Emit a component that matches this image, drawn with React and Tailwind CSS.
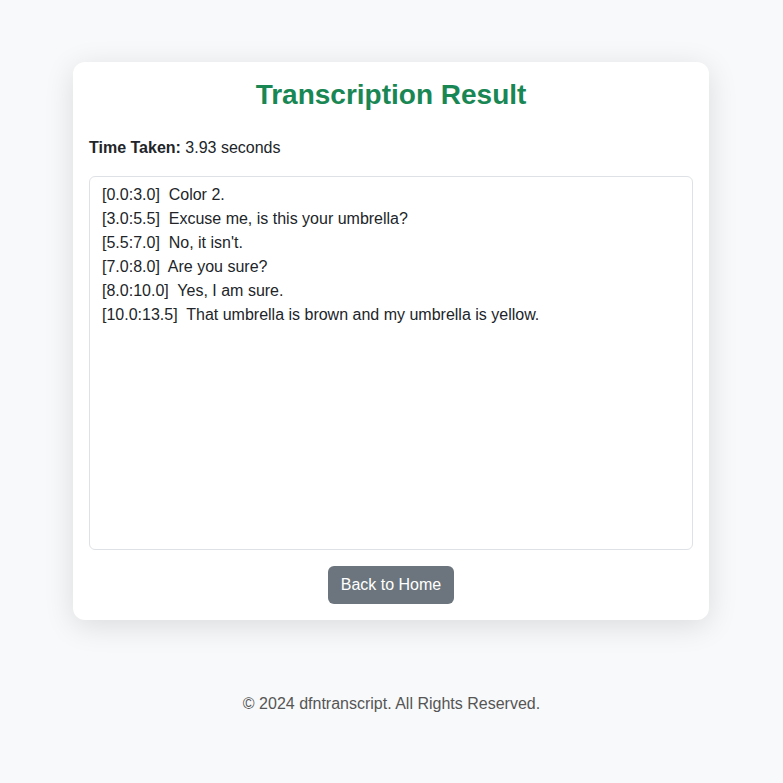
export default function App() {
  const lines = [
    "[0.0:3.0]  Color 2.",
    "[3.0:5.5]  Excuse me, is this your umbrella?",
    "[5.5:7.0]  No, it isn't.",
    "[7.0:8.0]  Are you sure?",
    "[8.0:10.0]  Yes, I am sure.",
    "[10.0:13.5]  That umbrella is brown and my umbrella is yellow.",
  ];
  return (
    <div className="min-h-[783px] bg-[#f8f9fa] text-[#212529] font-['Liberation_Sans',Arial,sans-serif] text-[16px] leading-6 pt-[62px]">
      <div className="ml-[73px] w-[636px] bg-white rounded-[12px] shadow-[0_6px_30px_rgba(0,0,0,0.12)] p-4">
        <h2 className="text-center text-[28px] leading-[34px] font-bold text-[#198754] mb-6">Transcription Result</h2>
        <p className="mb-4"><strong>Time Taken:</strong> 3.93 seconds</p>
        <div className="h-[374px] border border-[#dee2e6] rounded-[6px] px-3 py-[6px] whitespace-pre overflow-hidden">
          {lines.join("\n")}
        </div>
        <div className="flex justify-center mt-4">
          <button className="bg-[#6c757d] text-white rounded-[6px] px-[13px] h-[38px] text-[16px]">Back to Home</button>
        </div>
      </div>
      <footer className="text-center text-[#555] mt-[72px]">© 2024 dfntranscript. All Rights Reserved.</footer>
    </div>
  );
}
